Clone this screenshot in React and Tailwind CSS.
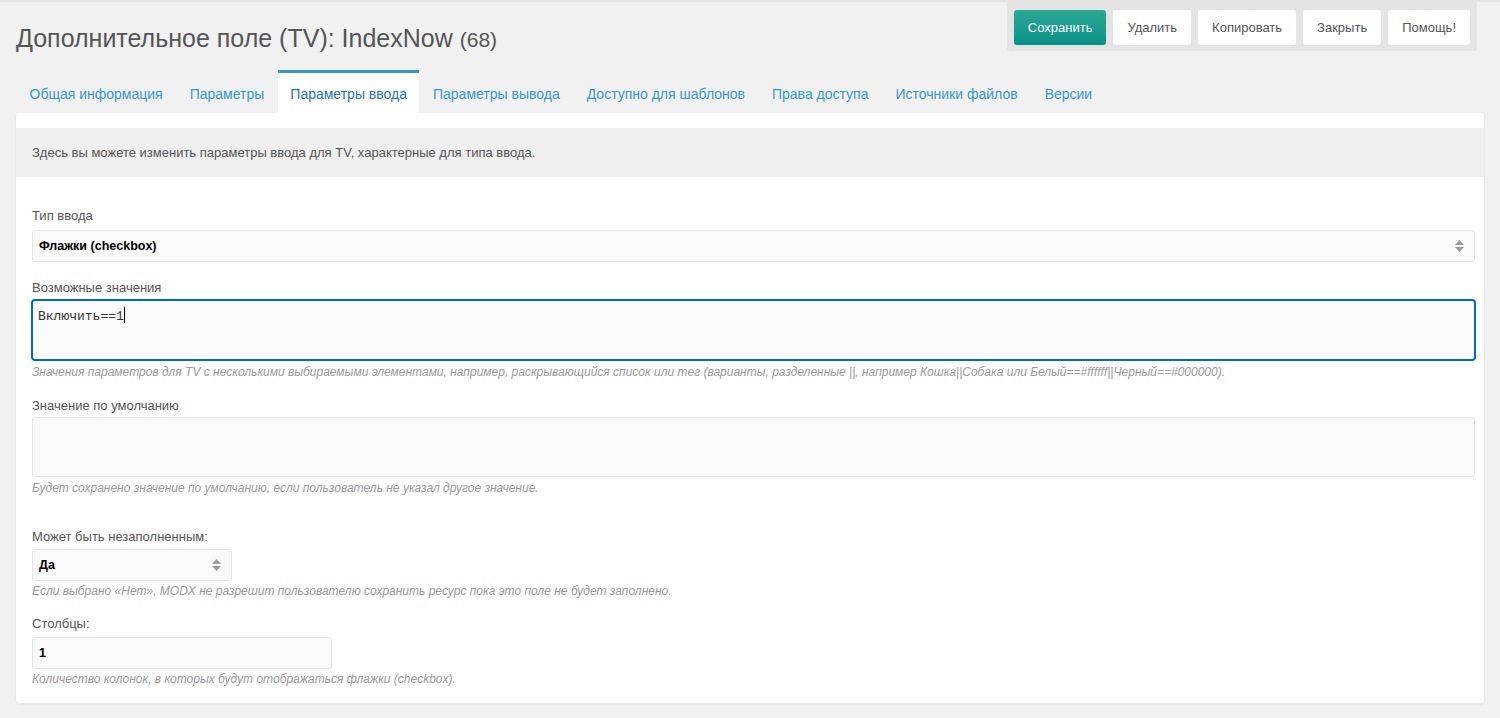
import React from 'react';

const tabs = [
  'Общая информация',
  'Параметры',
  'Параметры ввода',
  'Параметры вывода',
  'Доступно для шаблонов',
  'Права доступа',
  'Источники файлов',
  'Версии',
];

const SelectArrows = () => (
  <svg width="9" height="12" viewBox="0 0 9 12" className="text-[#999]">
    <path d="M4.5 0 L9 5 H0 Z" fill="currentColor" />
    <path d="M4.5 12 L9 7 H0 Z" fill="currentColor" />
  </svg>
);

const Help = ({ children, className = 'mt-[3px]' }) => (
  <p className={`text-[12px] italic text-[#999] leading-[16px] ${className}`}>{children}</p>
);

const Label = ({ children, className = 'mb-[5px]' }) => (
  <label className={`block text-[13px] text-[#555] leading-[16px] ${className}`}>{children}</label>
);

const App = () => {
  return (
    <div className="min-h-screen bg-[#f1f1f1] font-['Liberation_Sans',Arial,sans-serif] border-t-2 border-[#e4e4e4]">
      {/* header */}
      <div className="flex justify-between items-start px-[16px]">
        <h1 className="pt-[20px] text-[25px] text-[#555] leading-[32px]">
          Дополнительное поле (TV): IndexNow <span className="text-[21px]">(68)</span>
        </h1>
        <div className="flex gap-[7px] bg-[#e4e4e4] px-[7px] pt-[8px] pb-[6px] rounded-b-[3px] mr-[7px]">
          <button className="h-[35px] px-[14px] rounded-[3px] text-[13px] text-white bg-gradient-to-b from-[#2aa898] to-[#069185]">
            Сохранить
          </button>
          {['Удалить', 'Копировать', 'Закрыть', 'Помощь!'].map((b) => (
            <button key={b} className="h-[35px] px-[14px] rounded-[3px] text-[13px] text-[#555] bg-white">
              {b}
            </button>
          ))}
        </div>
      </div>

      {/* tabs */}
      <div className="flex px-[16px] mt-[14px]">
        {tabs.map((t, i) =>
          i === 2 ? (
            <div key={t} className="bg-white border-t-[3px] border-[#3697cd] px-[12.5px] pt-[13px] pb-[11px] text-[14px] text-[#1f73b0] leading-[16px]">
              {t}
            </div>
          ) : (
            <div key={t} className="px-[13.5px] pt-[16px] pb-[11px] text-[14px] text-[#3697cd] leading-[16px]">
              {t}
            </div>
          )
        )}
      </div>

      {/* panel */}
      <div className="mx-[16px] bg-white rounded-[3px] shadow-[0_1px_3px_rgba(0,0,0,0.08)] pt-[15px] pb-[16px]">
        <div className="bg-[#efefef] h-[49px] flex items-center px-[16px] text-[13px] text-[#555]">
          Здесь вы можете изменить параметры ввода для TV, характерные для типа ввода.
        </div>

        <div className="pl-[16px] pr-[9px] pt-[31px]">
          <Label className="mb-[6px]">Тип ввода</Label>
          <div className="h-[32px] bg-[#fafafa] border border-[#e4e4e4] rounded-[3px] flex items-center justify-between px-[6px] pr-[10px] text-[12.5px] font-bold text-black">
            <span>Флажки (checkbox)</span>
            <SelectArrows />
          </div>

          <div className="mt-[18px]">
            <Label className="mb-[3px]">Возможные значения</Label>
            <div className="-mx-[1px] h-[62px] bg-[#fafafa] border-2 border-[#0066dd] rounded-[4px] px-[5px] pt-[6px] text-[13px] text-[#333] font-['Liberation_Mono',monospace] flex items-start">
              <span>Включить==1</span>
              <span className="inline-block w-px h-[16px] bg-black" />
            </div>
            <Help>
              Значения параметров для TV с несколькими выбираемыми элементами, например, раскрывающийся список или тег (варианты, разделенные ||, например Кошка||Собака или Белый==#ffffff||Черный==#000000).
            </Help>
          </div>

          <div className="mt-[18px]">
            <Label className="mb-[3px]">Значение по умолчанию</Label>
            <div className="h-[60px] bg-[#fafafa] border border-[#e4e4e4] rounded-[3px]" />
            <Help>Будет сохранено значение по умолчанию, если пользователь не указал другое значение.</Help>
          </div>

          <div className="mt-[33px]">
            <Label className="mb-[4px]">Может быть незаполненным:</Label>
            <div className="w-[200px] h-[32px] bg-[#fafafa] border border-[#e4e4e4] rounded-[3px] flex items-center justify-between px-[6px] pr-[10px] text-[12.5px] font-bold text-black">
              <span>Да</span>
              <SelectArrows />
            </div>
            <Help className="mt-[2px]">Если выбрано «Нет», MODX не разрешит пользователю сохранить ресурс пока это поле не будет заполнено.</Help>
          </div>

          <div className="mt-[17px]">
            <Label>Столбцы:</Label>
            <div className="w-[300px] h-[32px] bg-[#fafafa] border border-[#e4e4e4] rounded-[3px] flex items-center px-[6px] text-[12.5px] font-bold text-black">
              1
            </div>
            <Help className="mt-[2px]">Количество колонок, в которых будут отображаться флажки (checkbox).</Help>
          </div>
        </div>
      </div>
      <div className="h-[16px]" />
    </div>
  );
};

export default App;
